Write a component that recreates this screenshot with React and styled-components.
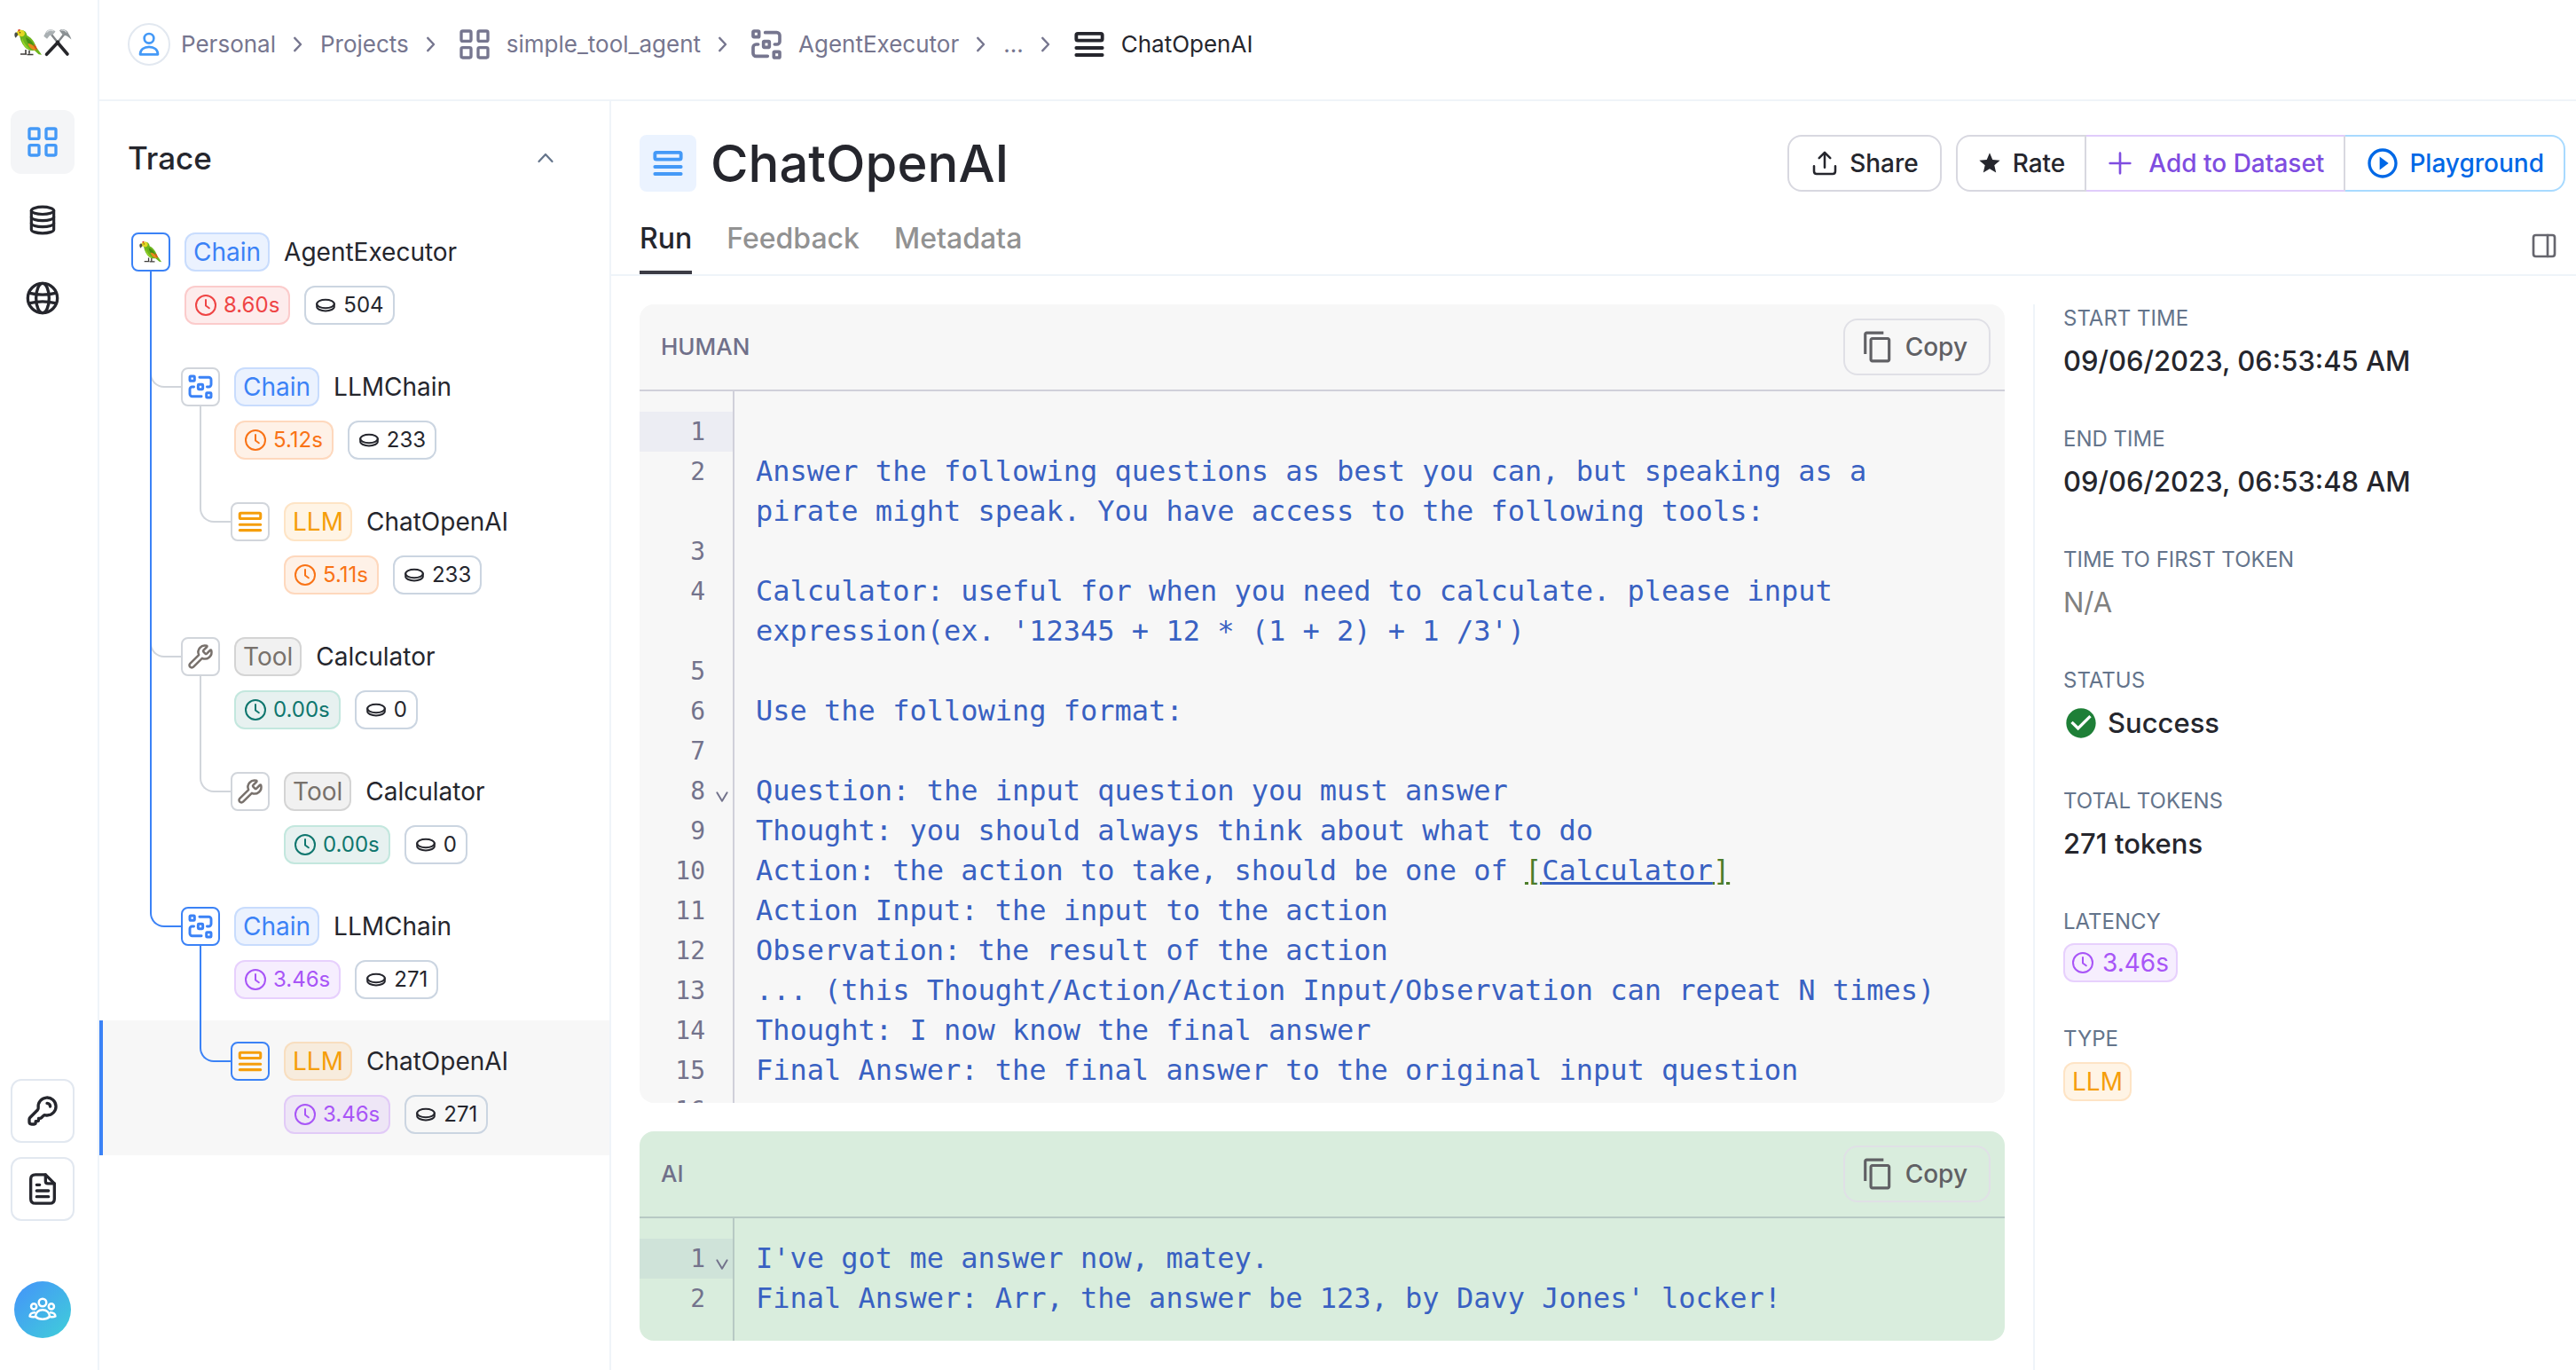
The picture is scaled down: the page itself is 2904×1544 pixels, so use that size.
import React from "react";
import styled, { createGlobalStyle, css } from "styled-components";
import { PanelRight, Wrench } from "lucide-react";
import { MdContentCopy, MdPlayCircleOutline, MdStar, MdCheckCircle } from "react-icons/md";

const GlobalStyle = createGlobalStyle`
  *, *::before, *::after { box-sizing: border-box; }
  body {
    margin: 0;
    background: #fff;
    color: #25262d;
    font-family: Inter, "Liberation Sans", sans-serif;
    font-size: 28px;
    line-height: 40px;
  }
  button { font: inherit; color: inherit; background: none; border: 0; padding: 0; cursor: pointer; }
  a { color: inherit; text-decoration: none; }
  h1, h2, p, ol, ul, dl, dd, dt { margin: 0; padding: 0; list-style: none; }
  svg { display: block; flex: none; }
`;

const LINE = "#eff4f9";
const BLUE = "#3b82f6";
const GRAY = "#d1d5db";

/* ---------- icons ---------- */

const Stroke = ({ size = 40, width = 2, children }) => (
  <svg width={size} height={size} viewBox="0 0 24 24" fill="none" stroke="currentColor"
    strokeWidth={width} strokeLinecap="round" strokeLinejoin="round" aria-hidden="true">
    {children}
  </svg>
);

const GridIcon = ({ size }) => (
  <Stroke size={size}>
    <rect x="3" y="3" width="6.6" height="6.8" rx="1" />
    <rect x="14.4" y="3" width="6.6" height="6.8" rx="1" />
    <rect x="3" y="14.2" width="6.6" height="6.8" rx="1" />
    <rect x="14.4" y="14.2" width="6.6" height="6.8" rx="1" />
  </Stroke>
);

const DatabaseIcon = () => (
  <Stroke width={1.9}>
    <ellipse cx="12" cy="5.6" rx="7.6" ry="2.5" />
    <path d="M4.4 5.6v12.8c0 1.4 3.4 2.5 7.6 2.5s7.6-1.1 7.6-2.5V5.6" />
    <path d="M4.4 9.9c0 1.4 3.4 2.5 7.6 2.5s7.6-1.1 7.6-2.5" />
    <path d="M4.4 14.1c0 1.4 3.4 2.5 7.6 2.5s7.6-1.1 7.6-2.5" />
  </Stroke>
);

const GlobeIcon = () => (
  <Stroke>
    <circle cx="12" cy="12" r="10" />
    <ellipse cx="12" cy="12" rx="4.4" ry="10" />
    <path d="M3.4 8.600c5 1.300 12.200 1.300 17.200 0M3.400 15.400c5-1.300 12.200-1.300 17.200 0" />
  </Stroke>
);

const KeyIcon = () => (
  <Stroke>
    <path d="M17.200 9a2.400 2.400 0 0 0-2.200-2.200" />
    <path d="M15 15a6 6 0 1 0-5.900-5.200c.1.700 0 1.100-.5 1.600l-5.100 5.100c-.4.400-.5.700-.5 1.200v1.700c0 1.100.5 1.600 1.600 1.600h1.700c.8 0 1-.4 1-1v-1h1c.6 0 1-.4 1-1v-1h1c.5 0 .7-.2 1-.5l1.300-1.300c.5-.5.900-.4 1.600-.3.300.1.500.1.800.1Z" />
  </Stroke>
);

const FileIcon = () => (
  <Stroke>
    <path d="M14 2.300H7.200C5.200 2.300 4 3.300 4 5.300v13.400c0 2 1.200 3 3.200 3h9.600c2 0 3.200-1 3.200-3V8.300Z" />
    <path d="M14 2.300v4.400c0 1 .6 1.600 1.600 1.600H20M8 9.200h2M8 13.200h8M8 17.200h8" />
  </Stroke>
);

const FlowIcon = ({ size = 32 }) => (
  <Stroke size={size} width={2.2}>
    <rect x="3" y="3" width="4" height="4" rx=".6" />
    <rect x="10" y="10" width="4" height="4" rx=".6" />
    <rect x="17" y="17" width="4" height="4" rx=".6" />
    <path d="M11.200 4H19a2 2 0 0 1 2 2v4a2 2 0 0 1-2 2h-1.400M12.800 20H5a2 2 0 0 1-2-2v-4a2 2 0 0 1 2-2h1.400" />
  </Stroke>
);

const RowsIcon = ({ size = 32 }) => (
  <Stroke size={size} width={2.300}>
    <rect x="3.200" y="4.700" width="17.600" height="4.700" rx="1" />
    <path d="M3.200 14.400h17.600M3.200 19.200h17.600" />
  </Stroke>
);

const PersonIcon = () => (
  <Stroke size={32}>
    <circle cx="12" cy="7" r="4" />
    <path d="M4.500 20.500c0-4 3.200-6.400 7.500-6.400s7.500 2.400 7.500 6.400Z" />
  </Stroke>
);

const TeamIcon = () => (
  <Stroke size={32} width={1.900}>
    <circle cx="12" cy="6" r="3.200" />
    <circle cx="4.600" cy="9.300" r="2.300" />
    <circle cx="19.400" cy="9.300" r="2.300" />
    <path d="M6 17.800c0-3.300 2.500-5.600 6-5.600s6 2.300 6 5.600c-1.500 1.500-3.600 2.200-6 2.200s-4.500-.7-6-2.200Z" />
    <path d="M5.200 14.400c-2.400 0-4 1.400-4 3.200 1.300.7 2.800.8 4.300.4M18.800 14.400c2.400 0 4 1.400 4 3.200-1.300.7-2.800.8-4.300.4" />
  </Stroke>
);

const ClockIcon = () => (
  <Stroke size={24}>
    <circle cx="12" cy="12" r="11" />
    <path d="M12 6v6.500l3.800 2.800" />
  </Stroke>
);

const CoinIcon = () => (
  <Stroke size={24}>
    <ellipse cx="12" cy="10.500" rx="9.800" ry="4.700" />
    <path d="M2.200 10.500v3.200c0 2.600 4.400 4.700 9.800 4.700s9.800-2.100 9.800-4.700v-3.200" />
  </Stroke>
);

const ShareIcon = () => (
  <Stroke size={32} width={1.900}>
    <path d="M12 15.500V3M7.300 7.600 12 2.900l4.700 4.700M3 14.500v4.300c0 1.400.8 2.200 2.200 2.200h13.600c1.400 0 2.200-.8 2.200-2.200v-4.300" />
  </Stroke>
);

const PlusIcon = () => (
  <Stroke size={32}>
    <path d="M12 3.500v17M3.500 12h17" />
  </Stroke>
);

const ChevronRight = () => (
  <Stroke size={18} width={3.200}>
    <path d="m7 2.500 9 9.500-9 9.500" />
  </Stroke>
);

const ChevronUp = () => (
  <Stroke size={24} width={2.200}>
    <path d="m4.500 16 7.500-8 7.500 8" />
  </Stroke>
);

const FoldIcon = () => (
  <Stroke size={16} width={3}>
    <path d="m3.500 5 8.500 14L20.500 5" />
  </Stroke>
);

const ParrotShape = () => (
  <g>
    <path d="M5.500 3.500C9.500.5 14 3 14.500 8c3.500 1.500 8 6 9.500 11 1.500 3.500 4.500 7 7 10.800l-3.300-.6c-2-1.700-3.700-3.400-5.200-4.400-4 .7-8.500-.8-11-4.300C8 16.500 6 11 5.500 3.500Z" fill="#6cb51b" />
    <path d="M9 11c-.3 4 1 7.500 3.500 10 1.500 1.500 3.500 2.500 5.500 2.700-4-3-7-7.200-9-12.700Z" fill="#97d22c" />
    <path d="M2 6C3 1.500 9 .3 11.200 3.500c1.500 2.500.3 5-1.700 5.500C7.500 9.500 7 8.500 5.500 8.300 4.200 8 2 8 2 6Z" fill="#e3d624" />
    <path d="M1.500 4.500C-.1 5.500 0 9 1.800 10.800c.7-1.500 2-1.700 2.300-3.700C4.300 5.500 3 4 1.500 4.500Z" fill="#4a4f4a" />
    <path d="M4 1.800c1-.7 2-.8 3-.7L5.200 4Z" fill="#d8351a" />
    <circle cx="6.500" cy="4.800" r=".7" fill="#5c2a12" />
    <path d="M13 10c5 2 9.500 7 10 13-4.500-2-9-6.500-10-13Z" fill="#468f14" />
    <path d="M15.500 17c3.500 0 7 2 9 7.500-3 .5-7-1.500-9-7.500Z" fill="#e88a1c" />
    <path d="M22 17.500c2 1.500 3.600 4 3.900 7.200L23 22Z" fill="#e8451c" />
    <path d="M13 24v4.500M17 24.700v3.800M7 29h7M14.500 29.500h7" stroke="#3f3d3a" strokeWidth="1.600" fill="none" />
  </g>
);

const Parrot = ({ size = 26 }) => (
  <svg width={size} height={size} viewBox="0 0 32 32" aria-hidden="true"><ParrotShape /></svg>
);

const Logo = () => (
  <svg width="66" height="32" viewBox="0 0 66 32" role="img" aria-label="LangSmith">
    <ParrotShape />
    <path d="m42 7 8 10M56 7l-8 10" stroke="#7f8487" strokeWidth="2.400" />
    <path d="m48.500 15.500 11.500 13.500M49.500 15.500 36.500 29.300" stroke="#26262a" strokeWidth="3.600" strokeLinecap="round" />
    <path d="m33.300 8.800 3.700 3 3-3.800 3.500-.8 3-3.800C43 .2 38.500.6 36.200 3.500Z" fill="#aab0b3" />
    <path d="M64.500 12.500 60 9l-2-1-2.500.3-4.500-5.800C53 .2 57.500.6 60 3.500c1.300 2.500 3.300 5 4.500 9Z" fill="#8b9194" />
    <path d="M36.500 4.500c2-2.300 5-2.800 8-1.500M52.500 2.300c2.500-.8 5 .2 6.500 2.200" stroke="#d9dddf" strokeWidth="1.200" fill="none" />
  </svg>
);

/* ---------- shell ---------- */

const Page = styled.div`
  display: flex;
  min-height: 100vh;
`;

const Rail = styled.nav`
  flex: none;
  width: 112px;
  padding: 32px 12px 36px;
  border-right: 2px solid ${LINE};
  display: flex;
  flex-direction: column;
  align-items: flex-start;
  gap: 16px;
`;

const Brand = styled.a`
  display: flex;
  padding: 0 4px;
  margin-bottom: 44px;
`;

const RailButton = styled.button`
  width: 72px;
  height: 72px;
  border-radius: 12px;
  display: grid;
  place-items: center;
  ${(p) => p.$active && css`background: #f4f5f7; color: #4499f7;`}
  ${(p) => p.$outlined && css`border: 2px solid #e2e8f0;`}
`;

const RailSpacer = styled.div`
  flex: 1;
`;

const Avatar = styled.button`
  width: 64px;
  height: 64px;
  margin: 52px 4px 0;
  border-radius: 50%;
  display: grid;
  place-items: center;
  color: #fff;
  background: linear-gradient(135deg, #4499f7 10%, #40c9dc 90%);
`;

const Shell = styled.div`
  flex: 1;
  min-width: 0;
  display: flex;
  flex-direction: column;
`;

const TopBar = styled.header`
  height: 114px;
  padding: 24px 32px 36px;
  border-bottom: 2px solid ${LINE};
`;

const Crumbs = styled.ol`
  display: flex;
  align-items: center;
  gap: 16px;
  height: 52px;
  color: #76768f;
`;

const Crumb = styled.li`
  display: flex;
  align-items: center;
  gap: 16px;
`;

const CrumbLink = styled.a`
  display: flex;
  align-items: center;
  gap: ${(p) => (p.$tight ? "12px" : "16px")};
  padding-left: ${(p) => (p.$icon ? "4px" : "0")};
  font-size: 26px;
  color: ${(p) => (p.$current ? "#25262d" : "inherit")};
`;

const Badge = styled.span`
  width: 48px;
  height: 48px;
  border: 2px solid #e2e8f0;
  border-radius: 50%;
  display: grid;
  place-items: center;
  color: #4499f7;
`;

const Body = styled.div`
  flex: 1;
  display: flex;
`;

/* ---------- trace tree ---------- */

const TracePanel = styled.section`
  flex: none;
  width: 577px;
  border-right: 2px solid ${LINE};
`;

const TraceHead = styled.div`
  display: flex;
  align-items: center;
  justify-content: space-between;
  padding: 40px 60px 36px 32px;
  color: #64748b;
`;

const TraceTitle = styled.h2`
  font-size: 35px;
  font-weight: 500;
  line-height: 48px;
  color: #25262d;
`;

const Tree = styled.ul``;

const Node = styled.li`
  display: flex;
  height: 152px;
  padding-left: ${(p) => (p.$selected ? "32px" : "36px")};
  ${(p) => p.$selected && css`background: #f7f7f7; border-left: 4px solid ${BLUE};`}
`;

const Guide = styled.span`
  position: relative;
  flex: none;
  width: 56px;
  ${(p) => p.$elbow && css`
    &::before {
      content: "";
      position: absolute;
      left: 21px;
      right: 0;
      top: 0;
      height: 47px;
      border: solid ${p.$elbow};
      border-width: 0 0 2px 2px;
      border-bottom-left-radius: 16px;
    }
  `}
  ${(p) => p.$through && css`
    &::after {
      content: "";
      position: absolute;
      left: 21px;
      top: 0;
      bottom: 0;
      width: 2px;
      background: ${BLUE};
    }
  `}
`;

const IconColumn = styled.span`
  flex: none;
  display: flex;
  flex-direction: column;
  align-items: center;
  width: 44px;
  padding-top: 24px;
`;

const IconBox = styled.span`
  flex: none;
  width: 44px;
  height: 44px;
  border: 2px solid ${(p) => (p.$active ? BLUE : GRAY)};
  border-radius: 8px;
  display: grid;
  place-items: center;
  color: ${(p) => p.$color};
`;

const Stem = styled.span`
  flex: 1;
  width: 2px;
  background: ${(p) => (p.$active ? BLUE : GRAY)};
`;

const NodeBody = styled.div`
  display: flex;
  flex-direction: column;
  gap: 16px;
  padding: 24px 16px;
`;

const NodeLine = styled.div`
  display: flex;
  align-items: center;
  gap: 16px;
`;

const tones = {
  blue: ["#3b82f6", "rgba(59,130,246,.1)", "rgba(59,130,246,.2)"],
  amber: ["#f59e0b", "rgba(255,149,0,.1)", "rgba(249,146,22,.16)"],
  stone: ["#78716c", "rgba(0,0,0,.055)", "rgba(0,0,0,.12)"],
  red: ["#ef4444", "rgba(239,68,68,.1)", "rgba(239,68,68,.2)"],
  orange: ["#f97316", "rgba(249,115,22,.1)", "rgba(249,115,22,.2)"],
  teal: ["#0f766e", "rgba(15,118,110,.1)", "rgba(16,185,129,.17)"],
  purple: ["#a855f7", "rgba(168,85,247,.1)", "rgba(168,85,247,.2)"],
  plain: ["#25262d", "transparent", "#cbd5e1"],
};

const Pill = styled.span`
  display: inline-flex;
  align-items: center;
  gap: ${(p) => (p.$small ? "8px" : "10px")};
  height: 44px;
  padding: 0 ${(p) => (p.$small ? "10px" : "8px")};
  border: 2px solid ${(p) => tones[p.$tone][2]};
  border-radius: 12px;
  background: ${(p) => tones[p.$tone][1]};
  color: ${(p) => tones[p.$tone][0]};
  font-size: ${(p) => (p.$small ? "24px" : "28px")};
  white-space: nowrap;
`;

const NodeName = styled.span`
  font-size: 28px;
  white-space: nowrap;
`;

const kinds = {
  Chain: { tone: "blue", icon: <FlowIcon /> },
  LLM: { tone: "amber", icon: <RowsIcon /> },
  Tool: { tone: "stone", icon: <Wrench size={30} strokeWidth={2} /> },
};

const nodes = [
  { kind: "Chain", name: "AgentExecutor", time: "8.60s", tone: "red", tokens: 504, guides: [], active: true, stem: true, parrot: true },
  { kind: "Chain", name: "LLMChain", time: "5.12s", tone: "orange", tokens: 233, guides: [{ elbow: GRAY, through: true }], stem: true },
  { kind: "LLM", name: "ChatOpenAI", time: "5.11s", tone: "orange", tokens: 233, guides: [{ through: true }, { elbow: GRAY }] },
  { kind: "Tool", name: "Calculator", time: "0.00s", tone: "teal", tokens: 0, guides: [{ elbow: GRAY, through: true }], stem: true },
  { kind: "Tool", name: "Calculator", time: "0.00s", tone: "teal", tokens: 0, guides: [{ through: true }, { elbow: GRAY }] },
  { kind: "Chain", name: "LLMChain", time: "3.46s", tone: "purple", tokens: 271, guides: [{ elbow: BLUE }], active: true, stem: true },
  { kind: "LLM", name: "ChatOpenAI", time: "3.46s", tone: "purple", tokens: 271, guides: [{}, { elbow: BLUE }], active: true, selected: true },
];

const TraceNode = ({ node }) => {
  const kind = kinds[node.kind];
  return (
    <Node $selected={node.selected}>
      {node.guides.map((g, i) => <Guide key={i} $elbow={g.elbow} $through={g.through} />)}
      <IconColumn>
        <IconBox $active={node.active} $color={tones[kind.tone][0]}>
          {node.parrot ? <Parrot /> : kind.icon}
        </IconBox>
        {node.stem && <Stem $active={node.active} />}
      </IconColumn>
      <NodeBody>
        <NodeLine>
          <Pill $tone={kind.tone}>{node.kind}</Pill>
          <NodeName>{node.name}</NodeName>
        </NodeLine>
        <NodeLine>
          <Pill $tone={node.tone} $small><ClockIcon />{node.time}</Pill>
          <Pill $tone="plain" $small><CoinIcon />{node.tokens}</Pill>
        </NodeLine>
      </NodeBody>
    </Node>
  );
};

/* ---------- run detail ---------- */

const Detail = styled.main`
  flex: 1;
  min-width: 0;
  display: flex;
  flex-direction: column;
`;

const TitleBar = styled.div`
  display: flex;
  align-items: center;
  justify-content: space-between;
  padding: 38px 12px 0 32px;
`;

const TitleGroup = styled.div`
  display: flex;
  align-items: center;
  gap: 16px;
`;

const TitleIcon = styled.span`
  width: 64px;
  height: 64px;
  border-radius: 8px;
  background: #ebf3ff;
  color: #4499f7;
  display: grid;
  place-items: center;
`;

const Title = styled.h1`
  font-size: 58px;
  font-weight: 500;
  line-height: 64px;
`;

const Actions = styled.div`
  display: flex;
  gap: 16px;
`;

const ActionGroup = styled.div`
  display: flex;
`;

const ActionButton = styled.button`
  display: flex;
  align-items: center;
  gap: ${(p) => p.$gap || 12}px;
  height: 64px;
  padding: 0 ${(p) => p.$pad || 24}px;
  border: 2px solid ${(p) => p.$line || "#d8d8e0"};
  border-radius: 16px;
  color: ${(p) => p.$color || "#25262d"};
  font-weight: 500;
  white-space: nowrap;
  ${ActionGroup} > &:not(:first-child) { border-left: 0; border-top-left-radius: 0; border-bottom-left-radius: 0; }
  ${ActionGroup} > &:not(:last-child) { border-right-color: #d8d8e0; border-top-right-radius: 0; border-bottom-right-radius: 0; }
`;

const TabBar = styled.div`
  display: flex;
  justify-content: space-between;
  align-items: center;
  height: 95px;
  padding: 0 20px 0 32px;
  border-bottom: 2px solid ${LINE};
`;

const Tabs = styled.div`
  display: flex;
  align-self: stretch;
  gap: 39px;
`;

const Tab = styled.button`
  padding: 16px 0 0;
  font-size: 32px;
  font-weight: 500;
  color: ${(p) => (p.$active ? "#25262d" : "#929292")};
  border-bottom: 4px solid ${(p) => (p.$active ? "#3b3b44" : "transparent")};
`;

const PanelToggle = styled.button`
  padding-top: 28px;
  color: #66666e;
`;

const Content = styled.div`
  flex: 1;
  display: flex;
  padding: 32px 0 0 32px;
  gap: 32px;
`;

const Messages = styled.div`
  flex: 1;
  min-width: 0;
  display: flex;
  flex-direction: column;
  gap: 32px;
  padding-bottom: 32px;
`;

const Card = styled.section`
  display: flex;
  flex-direction: column;
  max-height: 900px;
  overflow: hidden;
  border-radius: 16px;
  background: ${(p) => (p.$ai ? "#d9eddd" : "#f7f7f7")};
  --rule: ${(p) => (p.$ai ? "#b7c9c4" : "#d0d0da")};
  --active: ${(p) => (p.$ai ? "#cfe3d9" : "#ecedf3")};
`;

const CardHead = styled.div`
  flex: none;
  display: flex;
  align-items: center;
  justify-content: space-between;
  padding: 16px 16px 16px 24px;
  border-bottom: 2px solid var(--rule);
`;

const CardLabel = styled.h2`
  font-size: 26px;
  font-weight: 500;
  color: #70708a;
`;

const CopyButton = styled.button`
  display: flex;
  align-items: center;
  gap: 12px;
  height: 64px;
  padding: 0 24px 0 18px;
  border: 2px solid #e0e0e6;
  border-radius: 16px;
  color: #606064;
  font-weight: 500;
`;

const Code = styled.div`
  font-family: "DejaVu Sans Mono", "Liberation Mono", monospace;
  font-size: 32px;
  line-height: 45px;
  color: #3961c2;
`;

const CodeRow = styled.div`
  display: flex;
`;

const Gutter = styled.div`
  flex: none;
  display: flex;
  justify-content: flex-end;
  align-items: flex-start;
  width: 107px;
  border-right: 2px solid var(--rule);
  color: #73738c;
  font-size: 28px;
  ${(p) => p.$pad && css`height: ${p.$pad}px;`}
`;

const LineNumber = styled.span`
  flex: 1;
  display: flex;
  justify-content: flex-end;
  align-items: center;
  height: 45px;
  background: ${(p) => (p.$active ? "var(--active)" : "transparent")};
`;

const Fold = styled.span`
  display: flex;
  align-items: flex-end;
  justify-content: center;
  width: 31px;
  height: 29px;
  padding-left: 6px;
`;

const CodeText = styled.div`
  flex: 1;
  min-width: 0;
  min-height: 45px;
  padding: 0 32px 0 24px;
  white-space: pre-wrap;
`;

const Bracket = styled.span`
  color: #4d7d2b;
  text-decoration: underline;
`;

const CodeLink = styled.a`
  text-decoration: underline;
`;

const CodeBlock = ({ lines, folds }) => (
  <Code>
    <CodeRow><Gutter $pad={23} /></CodeRow>
    {lines.map((line, i) => (
      <CodeRow key={i}>
        <Gutter>
          <LineNumber $active={i === 0}>
            {i + 1}
            <Fold>{folds.includes(i + 1) && <FoldIcon />}</Fold>
          </LineNumber>
        </Gutter>
        <CodeText>{line}</CodeText>
      </CodeRow>
    ))}
    <CodeRow><Gutter $pad={25} /></CodeRow>
  </Code>
);

const humanLines = [
  "",
  "Answer the following questions as best you can, but speaking as a pirate might speak. You have access to the following tools:",
  "",
  "Calculator: useful for when you need to calculate. please input expression(ex. '12345 + 12 * (1 + 2) + 1 /3')",
  "",
  "Use the following format:",
  "",
  "Question: the input question you must answer",
  "Thought: you should always think about what to do",
  <React.Fragment key="l">Action: the action to take, should be one of <Bracket>[</Bracket><CodeLink href="#calculator">Calculator</CodeLink><Bracket>]</Bracket></React.Fragment>,
  "Action Input: the input to the action",
  "Observation: the result of the action",
  "... (this Thought/Action/Action Input/Observation can repeat N times)",
  "Thought: I now know the final answer",
  "Final Answer: the final answer to the original input question",
  "",
];

const aiLines = [
  "I've got me answer now, matey.",
  "Final Answer: Arr, the answer be 123, by Davy Jones' locker!",
];

const Message = ({ label, ai, lines, folds }) => (
  <Card $ai={ai}>
    <CardHead>
      <CardLabel>{label}</CardLabel>
      <CopyButton type="button"><MdContentCopy size={38} />Copy</CopyButton>
    </CardHead>
    <CodeBlock lines={lines} folds={folds} />
  </Card>
);

/* ---------- facts column ---------- */

const Facts = styled.dl`
  flex: none;
  width: 612px;
  padding-left: 32px;
  border-left: 2px solid ${LINE};
  display: flex;
  flex-direction: column;
  gap: 48px;
`;

const Fact = styled.div`
  display: flex;
  flex-direction: column;
  align-items: flex-start;
  gap: 8px;
`;

const FactLabel = styled.dt`
  font-size: 24px;
  line-height: 32px;
  color: #64748b;
`;

const FactValue = styled.dd`
  display: flex;
  align-items: center;
  gap: 10px;
  min-height: ${(p) => (p.$snug ? "44px" : "48px")};
  font-size: 31px;
  font-weight: ${(p) => (p.$muted ? 400 : 500)};
  color: ${(p) => (p.$muted ? "#808080" : "#25262d")};
  ${Pill} { font-weight: 400; }
`;

const facts = [
  { label: "START TIME", value: "09/06/2023, 06:53:45 AM" },
  { label: "END TIME", value: "09/06/2023, 06:53:48 AM" },
  { label: "TIME TO FIRST TOKEN", value: "N/A", muted: true },
  { label: "STATUS", value: <><MdCheckCircle size={40} color="#1e7f37" />Success</> },
  { label: "TOTAL TOKENS", value: "271 tokens" },
  { label: "LATENCY", value: <Pill $tone="purple"><ClockIcon />3.46s</Pill>, snug: true },
  { label: "TYPE", value: <Pill $tone="amber">LLM</Pill> },
];

export default function App() {
  return (
    <>
      <GlobalStyle />
      <Page>
        <Rail aria-label="Main">
          <Brand href="#home"><Logo /></Brand>
          <RailButton type="button" $active aria-label="Projects"><GridIcon /></RailButton>
          <RailButton type="button" aria-label="Datasets"><DatabaseIcon /></RailButton>
          <RailButton type="button" aria-label="Hub"><GlobeIcon /></RailButton>
          <RailSpacer />
          <RailButton type="button" $outlined aria-label="API keys"><KeyIcon /></RailButton>
          <RailButton type="button" $outlined aria-label="Docs"><FileIcon /></RailButton>
          <Avatar type="button" aria-label="Account"><TeamIcon /></Avatar>
        </Rail>
        <Shell>
          <TopBar>
            <Crumbs aria-label="Breadcrumb">
              <Crumb><CrumbLink href="#personal" $tight><Badge><PersonIcon /></Badge>Personal</CrumbLink><ChevronRight /></Crumb>
              <Crumb><CrumbLink href="#projects">Projects</CrumbLink><ChevronRight /></Crumb>
              <Crumb><CrumbLink href="#project" $icon><GridIcon />simple_tool_agent</CrumbLink><ChevronRight /></Crumb>
              <Crumb><CrumbLink href="#agent" $icon><FlowIcon size={40} />AgentExecutor</CrumbLink><ChevronRight /></Crumb>
              <Crumb><CrumbLink href="#more">...</CrumbLink><ChevronRight /></Crumb>
              <Crumb><CrumbLink href="#run" $icon $current><RowsIcon size={40} />ChatOpenAI</CrumbLink></Crumb>
            </Crumbs>
          </TopBar>
          <Body>
            <TracePanel>
              <TraceHead>
                <TraceTitle>Trace</TraceTitle>
                <button type="button" aria-label="Collapse trace"><ChevronUp /></button>
              </TraceHead>
              <Tree>
                {nodes.map((node, i) => <TraceNode key={i} node={node} />)}
              </Tree>
            </TracePanel>
            <Detail>
              <TitleBar>
                <TitleGroup>
                  <TitleIcon><RowsIcon size={40} /></TitleIcon>
                  <Title>ChatOpenAI</Title>
                </TitleGroup>
                <Actions>
                  <ActionButton type="button"><ShareIcon />Share</ActionButton>
                  <ActionGroup>
                    <ActionButton type="button" $pad={22}><MdStar size={28} />Rate</ActionButton>
                    <ActionButton type="button" $color="#7f4de0" $line="#e0ccfb" $pad={22} $gap={16}><PlusIcon />Add to Dataset</ActionButton>
                    <ActionButton type="button" $color="#0068e6" $line="#a8daff" $pad={22} $gap={10}><MdPlayCircleOutline size={40} />Playground</ActionButton>
                  </ActionGroup>
                </Actions>
              </TitleBar>
              <TabBar>
                <Tabs role="tablist">
                  <Tab type="button" role="tab" aria-selected="true" $active>Run</Tab>
                  <Tab type="button" role="tab" aria-selected="false">Feedback</Tab>
                  <Tab type="button" role="tab" aria-selected="false">Metadata</Tab>
                </Tabs>
                <PanelToggle type="button" aria-label="Toggle side panel"><PanelRight size={32} strokeWidth={2} /></PanelToggle>
              </TabBar>
              <Content>
                <Messages>
                  <Message label="HUMAN" lines={humanLines} folds={[8]} />
                  <Message label="AI" ai lines={aiLines} folds={[1]} />
                </Messages>
                <Facts>
                  {facts.map((f) => (
                    <Fact key={f.label}>
                      <FactLabel>{f.label}</FactLabel>
                      <FactValue $snug={f.snug} $muted={f.muted}>{f.value}</FactValue>
                    </Fact>
                  ))}
                </Facts>
              </Content>
            </Detail>
          </Body>
        </Shell>
      </Page>
    </>
  );
}
